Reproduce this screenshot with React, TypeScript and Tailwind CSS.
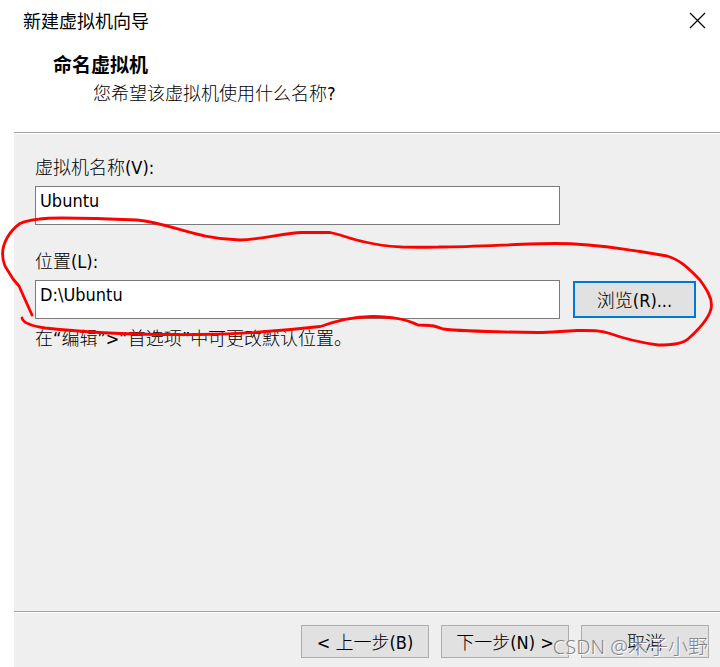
import React from 'react';

interface FieldProps {
  id: string;
  label: string;
  hotkey: string;
  value: string;
  children?: React.ReactNode;
}

const Cjk: React.FC<{ children: React.ReactNode }> = ({ children }) => (
  <span className="font-['Noto_Sans_CJK_SC',sans-serif] font-light">{children}</span>
);

const Field: React.FC<FieldProps> = ({ id, label, hotkey, value, children }) => {
  return (
    <div>
      <label htmlFor={id} className="block h-6 leading-6">
        <Cjk>{label}</Cjk>({hotkey}):
      </label>
      <div className="mt-2 flex items-center gap-[13px]">
        <input
          id={id}
          type="text"
          defaultValue={value}
          className="h-[39px] min-w-0 flex-1 border border-[#7a7a7a] bg-white px-1 pb-2.5 outline-none"
        />
        <div className="w-[123px]">{children}</div>
      </div>
    </div>
  );
};

const NavButton: React.FC<{ children: React.ReactNode }> = ({ children }) => (
  <button type="button" className="h-[33px] w-32 border border-[#adadad] bg-[#e1e1e1] whitespace-pre">
    {children}
  </button>
);

// Red pen line drawn around the location row
const PenMark: React.FC = () => (
  <svg
    className="pointer-events-none absolute top-0 left-0"
    width="720"
    height="360"
    viewBox="0 0 720 360"
    fill="none"
    stroke="#ff0000"
    strokeWidth="2.8"
    strokeLinecap="round"
    strokeLinejoin="round"
    aria-hidden="true"
  >
    <path d="M32 315L19 286L13 279L5 266C1 256 2 247 7 238C11 231 15 227 20 223.500C28 220 42 218 62 218C90 218 115 219 137 220C170 223 195 239 240 240C265 239 283 233 302 232.500L330 232.500C343 235 350 239 365 242C390 248 410 247.500 440 247C480 247 520 243.500 555 243.500C595 243.500 620 249 640 251.500L667 256C681 260 690 270 700 280C707 290 711.500 297 711.500 305C711.500 317 697 331 688 339C681 345 667 345 658 345C644 343 625 339 610 333.500C600 330 592 330.500 577 330.500C562 331 552 332.500 538 332.500C500 332 460 331 443 329C437 327 434 325.500 430 325.500L418 325C404 318 390 317 373 316.500C350 316.500 335 322 320 326.500C290 330 240 334 200 334.500C130 335 80 332 45 328C32 326 23 323 22 318" />
  </svg>
);

const App: React.FC = () => {
  return (
    <div className="relative flex min-h-screen flex-col overflow-hidden bg-white font-['DejaVu_Sans_Condensed','DejaVu_Sans','Noto_Sans_CJK_SC',sans-serif] text-[18px] text-black">
      <header className="flex h-10 items-center justify-between pr-[14px] pl-[23px]">
        <h1 className="font-['Noto_Sans_CJK_SC',sans-serif] leading-6">新建虚拟机向导</h1>
        <button type="button" aria-label="关闭" className="p-0">
          <svg width="17" height="17" viewBox="0 0 17 17" stroke="#000" strokeWidth="1.2">
            <path d="M1 1L16 16M16 1L1 16" />
          </svg>
        </button>
      </header>

      <div className="h-[92px] pt-2.5 pl-[53px]">
        <h2 className="font-['Noto_Sans_CJK_SC',sans-serif] text-[19px] leading-7 font-bold">命名虚拟机</h2>
        <p className="pl-10 leading-7">
          <Cjk>您希望该虚拟机使用什么名称</Cjk>?
        </p>
      </div>

      <main className="ml-[14px] flex flex-1 flex-col border-t border-[#a0a0a0] bg-[#efefef]">
        <form className="flex-1 border-t border-white pt-5 pr-6 pl-[21px]">
          <div className="flex flex-col gap-[23px]">
            <Field id="vm-name" label="虚拟机名称" hotkey="V" value="Ubuntu" />
            <Field id="vm-location" label="位置" hotkey="L" value="D:\Ubuntu">
              <button type="button" className="h-[37px] w-full border-2 border-[#0078d7] bg-[#e1e1e1]">
                <Cjk>浏览</Cjk>(R)...
              </button>
            </Field>
          </div>
          <p className="mt-1.5 leading-6">
            <Cjk>在</Cjk>“<Cjk>编辑</Cjk>”&gt;“<Cjk>首选项</Cjk>”<Cjk>中可更改默认位置。</Cjk>
          </p>
        </form>

        <footer className="border-t border-[#a0a0a0]">
          <div className="flex justify-end gap-3 border-t border-white pt-3 pr-[11px] pb-[9px]">
            <NavButton>
              &lt; <Cjk>上一步</Cjk>(B)
            </NavButton>
            <NavButton>
              <Cjk>下一步</Cjk>(N) &gt;
            </NavButton>
            <NavButton>
              <Cjk>取消</Cjk>
            </NavButton>
          </div>
        </footer>
      </main>

      <PenMark />
      <span className="pointer-events-none absolute right-3 bottom-1.5 font-['Noto_Sans','Noto_Sans_CJK_SC',sans-serif] text-[20px] leading-7 font-light text-[#858585] [text-shadow:1px_1px_0_#ffffff]">
        CSDN @木子小野
      </span>
    </div>
  );
};

export default App;
